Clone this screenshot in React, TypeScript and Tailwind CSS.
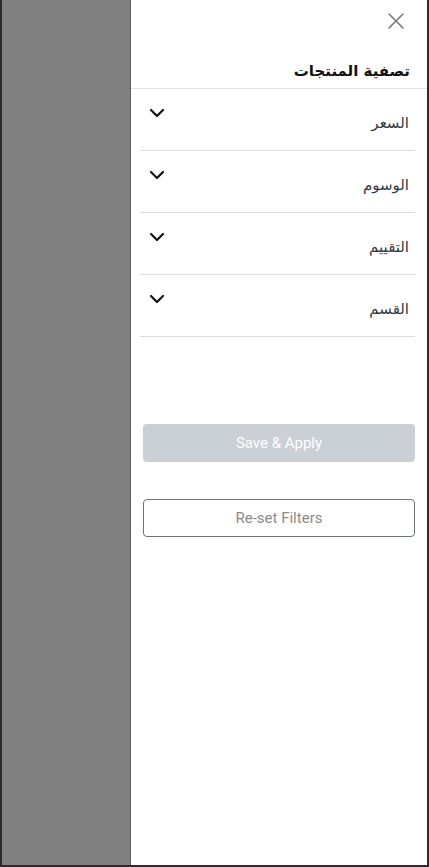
const filters = ['السعر', 'الوسوم', 'التقييم', 'القسم']

function Chevron() {
  return (
    <svg width="16" height="10" viewBox="0 0 16 10" fill="none">
      <polyline points="2,2 8,8 14,2" stroke="#111" strokeWidth="2.2" strokeLinecap="round" strokeLinejoin="round" />
    </svg>
  )
}

export default function App() {
  return (
    <div className="flex h-[867px] w-full bg-[#2b2b2f] px-[2px] pb-[2px]">
      {/* overlay */}
      <div className="w-[129px] shrink-0 border-r border-[#5c5c5c] bg-[#808080]" />

      {/* drawer */}
      <div dir="rtl" className="flex-1 bg-white font-['DejaVu_Sans',sans-serif]">
        <div className="flex justify-start pr-[23px] pt-[13px]">
          <svg width="16" height="16" viewBox="0 0 16 16" fill="none">
            <path d="M1 1 L15 15 M15 1 L1 15" stroke="#7a7a7a" strokeWidth="1.6" strokeLinecap="round" />
          </svg>
        </div>
        <h2 className="mt-[30px] pr-[17px] pb-[5px] text-[15px] font-bold leading-[24px] text-[#111]">
          تصفية المنتجات
        </h2>
        <div className="border-b border-[#e2e2e2]" />

        <div className="ml-[9px] mr-[12px]">
          {filters.map((f) => (
            <div key={f} className="flex h-[62px] justify-between border-b border-[#dedede] pr-[6px] pl-[9px]">
              <span className="pt-[23px] text-[15px] leading-[22px] text-[#333a44]">{f}</span>
              <span className="pt-[19px]">
                <Chevron />
              </span>
            </div>
          ))}
        </div>

        <div className="ml-[12px] mr-[12px] mt-[87px] font-['Roboto',sans-serif]">
          <button className="h-[38px] w-full rounded-[4px] bg-[#cbd0d7] text-[15px] text-white">
            Save &amp; Apply
          </button>
          <button className="mt-[37px] h-[38px] w-full rounded-[4px] border border-[#6f747b] bg-white text-[15px] text-[#8a8a8a]">
            Re-set Filters
          </button>
        </div>
      </div>
    </div>
  )
}
